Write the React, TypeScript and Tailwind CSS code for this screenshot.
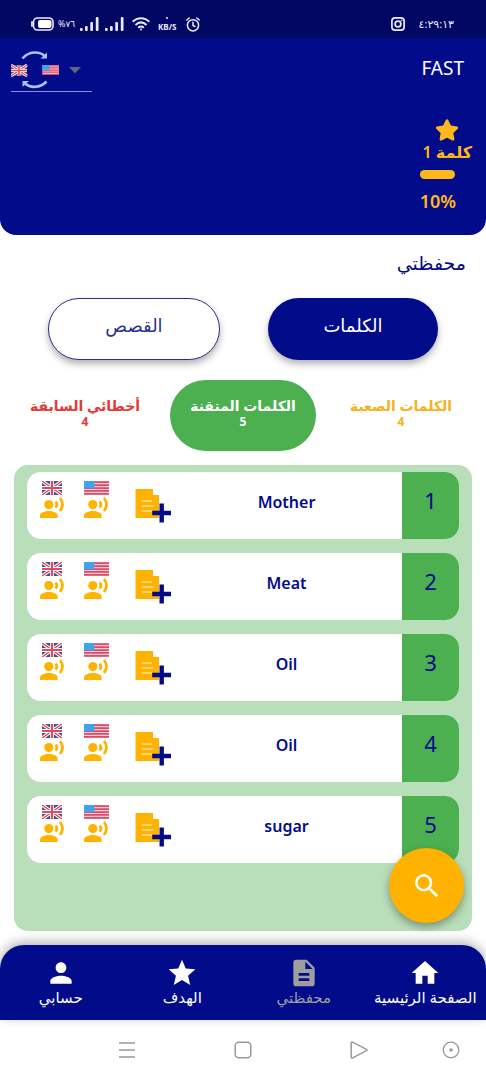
import React from "react";
import { MdDescription, MdHome, MdPerson, MdSearch, MdStar } from "react-icons/md";
import { FaStar } from "react-icons/fa";

const words = ["Mother", "Meat", "Oil", "Oil", "sugar"];

const UkShapes = () => (
  <>
    <rect width="60" height="40" fill="#3d5290" />
    <path d="M0 0L60 40M60 0L0 40" stroke="#fff" strokeWidth="10" />
    <path d="M0 0L60 40M60 0L0 40" stroke="#e2435a" strokeWidth="4" />
    <path d="M30 0V40M0 20H60" stroke="#fff" strokeWidth="11" />
    <path d="M30 0V40M0 20H60" stroke="#e5485c" strokeWidth="6" />
  </>
);

const UsShapes = () => (
  <>
    <rect width="60" height="40" fill="#f7cdd6" />
    <path
      d="M0 3H60M0 11.5H60M0 20H60M0 28.5H60M0 37H60"
      stroke="#dc4a68"
      strokeWidth="5"
    />
    <rect width="25" height="21" fill="#41a4ea" />
  </>
);

const UkFlag = () => (
  <svg viewBox="0 0 60 40" preserveAspectRatio="none" className="h-3.5 w-5" aria-hidden="true">
    <UkShapes />
  </svg>
);

const UsFlag = () => (
  <svg viewBox="0 0 60 40" preserveAspectRatio="none" className="h-3.5 w-[25px]" aria-hidden="true">
    <UsShapes />
  </svg>
);

const VoiceIcon = () => (
  <svg viewBox="0 0 26 26" className="size-[26px]" fill="#ffb300" aria-hidden="true">
    <circle cx="9.8" cy="9.6" r="4.6" />
    <path d="M1 23V20.500C1 17.500 6 16 9.800 16S18.600 17.500 18.600 20.500V23Z" />
    <path
      d="M16.600 6.600Q19.200 9.600 16.600 12.600M21 3Q26 9.500 21 16"
      fill="none"
      stroke="#ffb300"
      strokeWidth="2.800"
    />
  </svg>
);

const Signal = () => (
  <svg viewBox="0 0 19 14" className="h-3.5 w-[19px]" fill="#e9ebff" aria-hidden="true">
    <rect x="0" y="11" width="2.700" height="3" rx="1" />
    <rect x="5" y="9" width="2.700" height="5" rx="1" />
    <rect x="10.300" y="5" width="2.700" height="9" rx="1" />
    <rect x="15.800" y="0" width="2.700" height="14" rx="1" />
  </svg>
);

function StatusBar() {
  return (
    <div dir="ltr" className="flex h-[38px] items-center bg-[#020764] pt-2.5 pr-8 pl-[31px] text-[#e9ebff]">
      <svg viewBox="0 0 23 14" className="h-3.5 w-[23px]" aria-hidden="true">
        <rect x="2.500" y="1" width="19.500" height="12" rx="4" fill="none" stroke="#e9ebff" strokeWidth="1.600" />
        <path d="M1 5V9" stroke="#e9ebff" strokeWidth="1.800" strokeLinecap="round" />
        <rect x="7" y="3" width="13.500" height="8" rx="2" fill="#fff" />
      </svg>
      <span className="ml-1 w-[22px] text-[9px] whitespace-nowrap">%٧٦</span>
      <Signal />
      <span className="w-1.5" />
      <Signal />
      <svg viewBox="0 0 18 14" className="ml-2 h-3.5 w-[18px]" fill="none" stroke="#e9ebff" strokeWidth="2" aria-hidden="true">
        <path d="M.7 4.800C5.500 0 12.500 0 17.300 4.800M3.500 8C7 4.700 11 4.700 14.500 8M6.200 10.700C8 9.200 10 9.200 11.800 10.700" />
        <circle cx="9" cy="12.600" r="1" fill="#e9ebff" stroke="none" />
      </svg>
      <div className="ml-2 flex flex-col items-center gap-1">
        <span className="size-0.5 rounded-full bg-[#e9ebff]" />
        <span className="text-[8px] leading-2 font-bold">KB/S</span>
      </div>
      <svg viewBox="0 0 14 15" className="ml-2.5 h-[15px] w-3.5" fill="none" stroke="#e9ebff" strokeWidth="1.500" strokeLinecap="round" aria-hidden="true">
        <circle cx="7" cy="8.300" r="5.600" />
        <path d="M7 5.300V8.500L9 9.500M.8 3L3.200 1M13.200 3L10.800 1" />
      </svg>
      <svg viewBox="0 0 14 14" className="ml-auto size-3.5" fill="none" stroke="#e9ebff" strokeWidth="1.700" aria-hidden="true">
        <rect x=".9" y=".9" width="12.200" height="12.200" rx="3.200" />
        <circle cx="7" cy="7" r="2.900" />
        <circle cx="10.700" cy="3.400" r=".5" strokeWidth=".8" />
      </svg>
      <span className="ml-3.5 text-[11px]">٤:٢٩:١٣</span>
    </div>
  );
}

function LanguageSelect() {
  return (
    <div className="relative flex h-[46px] w-[81px] items-center justify-between border-b border-[#8d90d8] pt-0.5 pr-[3px]" dir="ltr">
      <svg viewBox="0 0 48 40" className="h-10 w-12" aria-hidden="true">
        <g transform="translate(0 15) scale(.267 .275)">
          <UkShapes />
        </g>
        <g transform="translate(31.500 15) scale(.275 .25)">
          <UsShapes />
        </g>
        <path d="M11.500 8.500C18 1 28 1 34 6" fill="none" stroke="#a5c6ff" strokeWidth="2.600" />
        <path d="M36 2.500V8.500H29.500Z" fill="#a5c6ff" />
        <path d="M35.500 31.500C29 38.500 19 38 14 33.500" fill="none" stroke="#a5c6ff" strokeWidth="2.600" />
        <path d="M11.500 37V31H18Z" fill="#a5c6ff" />
      </svg>
      <svg viewBox="0 0 28 28" className="size-7" aria-hidden="true">
        <path d="M8 11H20L14 17.500Z" fill="#62627a" />
      </svg>
      <select
        aria-label="Language"
        className="absolute inset-0 size-full cursor-pointer appearance-none opacity-0"
      >
        <option value="en" />
      </select>
    </div>
  );
}

const tabs = [
  { label: "الكلمات الصعبة", count: 4, style: "text-[#f5b21c]" },
  { label: "الكلمات المتقنة", count: 5, style: "bg-[#4caf50] text-white" },
  { label: "أخطائي السابقة", count: 4, style: "text-[#e53935]" },
];

const navItems = [
  { label: "الصفحة الرئيسية", Icon: MdHome, style: "text-white" },
  { label: "محفظتي", Icon: MdDescription, style: "text-[#9e9e9e]" },
  { label: "الهدف", Icon: MdStar, style: "text-white" },
  { label: "حسابي", Icon: MdPerson, style: "text-white" },
];

function WordRow({ word, index }: { word: string; index: number }) {
  return (
    <li className="flex h-[67px] overflow-hidden rounded-[14px] bg-white text-[#020c8b]">
      <div className="flex w-[57px] items-center justify-center bg-[#4caf50] pb-2.5 text-[22px]">{index}</div>
      <div className="flex flex-1 items-center justify-center pb-2 text-base font-semibold">{word}</div>
      <div className="flex items-start pt-[9px] pl-3">
        <button type="button" aria-label="Add note" className="mt-[7px]">
          <svg viewBox="0 0 36 35" className="h-[35px] w-9" aria-hidden="true">
            <path d="M.5 1H18V7H24V30H.5Z" fill="#ffb300" />
            <path d="M6.500 13H17M6.500 18H18.500M6.500 23H17" stroke="#ffdf91" strokeWidth="1.300" />
            <path d="M26.700 15.500V34.500M17.200 25H36" stroke="#020c8b" strokeWidth="4.400" />
          </svg>
        </button>
        <button type="button" aria-label="American pronunciation" className="mr-[26px] flex flex-col items-center">
          <UsFlag />
          <VoiceIcon />
        </button>
        <button type="button" aria-label="British pronunciation" className="mr-[18px] flex flex-col items-center">
          <UkFlag />
          <VoiceIcon />
        </button>
      </div>
    </li>
  );
}

export default function App() {
  return (
    <div
      dir="rtl"
      className="flex min-h-screen flex-col bg-white font-['Noto_Sans','DejaVu_Sans',sans-serif]"
    >
      <StatusBar />
      <header className="flex h-[197px] justify-between rounded-b-2xl bg-[#020c8b] pt-2 pr-3.5 pl-[11px]">
        <div className="flex flex-col items-start text-[#ffb81c]">
          <h1 className="mt-2 pr-2 text-[19px] leading-7 text-white">FAST</h1>
          <div className="mt-9 flex flex-col items-center">
            <FaStar className="size-6" aria-hidden="true" />
            <span className="text-base leading-5 font-semibold">كلمة 1</span>
          </div>
          <div className="mt-2 mr-4 flex flex-col items-center gap-2">
            <div className="h-[9px] w-[35px] rounded-full bg-[#ffb81c]" />
            <span className="text-lg font-semibold" dir="ltr">10%</span>
          </div>
        </div>
        <LanguageSelect />
      </header>

      <main className="relative flex flex-1 flex-col pb-3.5">
        <h2 className="mt-3.5 pr-5 text-[19px] leading-7 font-medium text-[#020c8b]">محفظتي</h2>
        <div className="mt-[21px] flex gap-12 px-12 text-lg">
          <button type="button" className="h-[62px] flex-1 rounded-full bg-[#020c8b] pb-2 text-white shadow-[0_4px_7px_rgba(0,0,0,0.3)]">
            الكلمات
          </button>
          <button type="button" className="h-[62px] flex-1 rounded-full border border-[#2a2f8c] bg-white pb-2 text-[#2a3094] shadow-[0_4px_7px_rgba(0,0,0,0.3)]">
            القصص
          </button>
        </div>
        <div className="mt-5 flex gap-3 px-3">
          {tabs.map(({ label, count, style }) => (
            <button
              key={label}
              type="button"
              className={`flex h-[71px] flex-1 flex-col items-center justify-center rounded-full pb-1 text-sm leading-4 font-bold whitespace-nowrap ${style}`}
            >
              <span>{label}</span>
              <span className="text-xs leading-4">{count}</span>
            </button>
          ))}
        </div>
        <section className="mx-3.5 mt-3.5 flex-1 rounded-[14px] bg-[#b9dfba] px-[13px] pt-[7px]">
          <ul className="flex flex-col gap-3.5">
            {words.map((word, i) => (
              <WordRow key={i} word={word} index={i + 1} />
            ))}
          </ul>
        </section>
        <button
          type="button"
          aria-label="Search"
          className="absolute right-[22px] bottom-[22px] flex size-[75px] items-center justify-center rounded-full bg-[#ffb300] text-white shadow-[0_4px_8px_rgba(0,0,0,0.35)]"
        >
          <MdSearch className="size-8" />
        </button>
      </main>

      <nav className="flex h-[75px] rounded-t-3xl bg-[#020c8b] pt-3 shadow-[0_-3px_12px_rgba(0,0,0,0.3)]">
        {navItems.map(({ label, Icon, style }) => (
          <a key={label} href="#" className={`flex flex-1 basis-0 flex-col items-center text-[15px] leading-5 whitespace-nowrap ${style}`}>
            <Icon className="size-8" aria-hidden="true" />
            <span className="-mt-0.5">{label}</span>
          </a>
        ))}
      </nav>

      <div dir="ltr" className="flex h-[60px] items-center justify-between pr-[26px] pl-[118px]">
        <div className="flex items-center gap-[98px]">
          <button type="button" aria-label="Menu">
            <svg viewBox="0 0 18 18" className="size-[18px]" stroke="#999" strokeWidth="1.300" aria-hidden="true">
              <path d="M1 2H17M1 9H17M1 16H17" />
            </svg>
          </button>
          <button type="button" aria-label="Overview">
            <svg viewBox="0 0 18 18" className="size-[18px]" fill="none" stroke="#999" strokeWidth="1.500" aria-hidden="true">
              <rect x="1.200" y="1.200" width="15.600" height="15.600" rx="3.500" />
            </svg>
          </button>
          <button type="button" aria-label="Forward">
            <svg viewBox="0 0 18 18" className="size-[18px]" fill="none" stroke="#999" strokeWidth="1.500" strokeLinejoin="round" aria-hidden="true">
              <path d="M1.200 2V16Q1.200 17.500 2.700 16.800L16.500 9.700Q17.500 9 16.500 8.300L2.700 1.200Q1.200 .5 1.200 2Z" />
            </svg>
          </button>
        </div>
        <button type="button" aria-label="Assist">
          <svg viewBox="0 0 18 18" className="size-[18px]" fill="none" stroke="#999" strokeWidth="1.300" aria-hidden="true">
            <circle cx="9" cy="9" r="7.800" />
            <circle cx="9" cy="9" r="1.800" fill="#999" stroke="none" />
          </svg>
        </button>
      </div>
    </div>
  );
}
